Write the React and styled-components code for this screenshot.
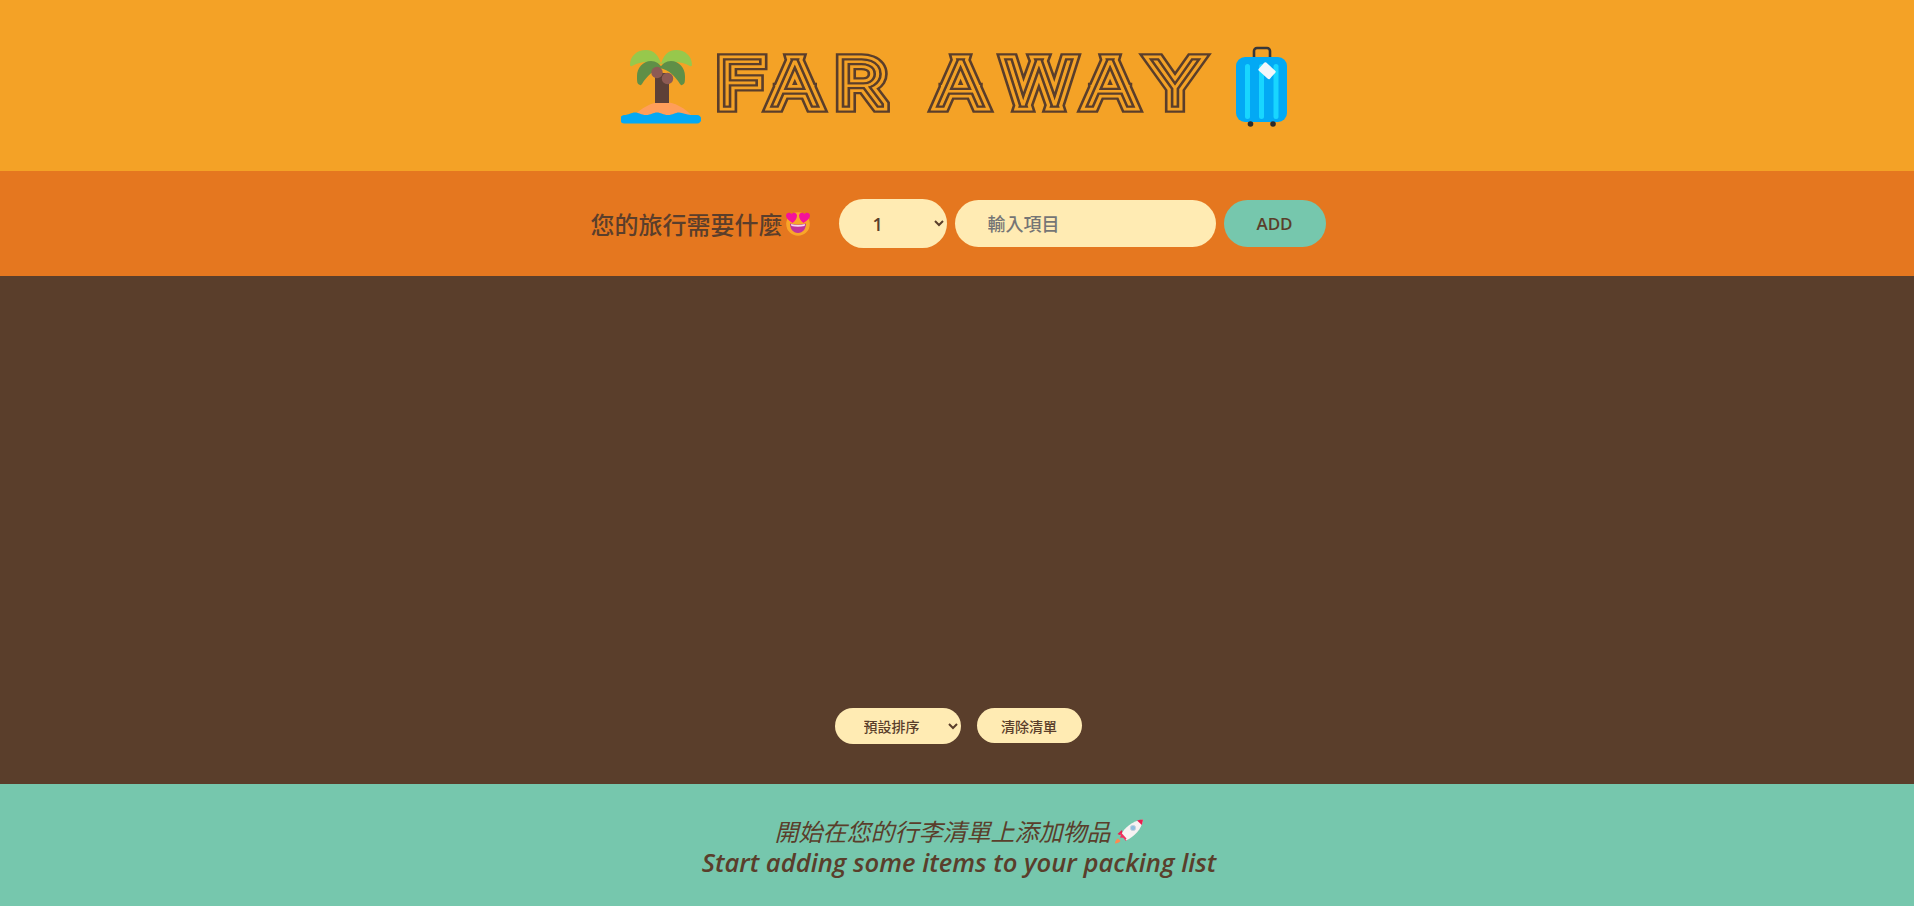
import React from "react";
import styled, { createGlobalStyle } from "styled-components";

const brown = "#5a3e2b";
const orange = "#f4a226";
const cream = "#ffebb3";
const green = "#76c7ad";
const sans = `"Open Sans", "Noto Sans CJK TC", sans-serif`;

const Global = createGlobalStyle`
  * { box-sizing: border-box; margin: 0; padding: 0; }
  html, body { height: 100%; }
  body { font-family: ${sans}; color: ${brown}; font-weight: 500; }
`;

const Page = styled.div`
  height: 906px;
  display: grid;
  grid-template-rows: 171px 105px 1fr 122px;
`;

const Header = styled.header`
  background: ${orange};
  display: flex;
  align-items: center;
  justify-content: center;
  padding: 4px 6px 0 0;
`;

const TitleMark = styled.svg`
  display: block;
  width: 498px;
  height: 65px;
  margin: 0 25px 10px 12px;
  overflow: visible;
  font-family: "Roboto", sans-serif;
  font-weight: 100;
  font-size: 62px;
`;

const SuitcaseIcon = styled.svg`
  display: block;
  margin-bottom: 2px;
`;

const Form = styled.form`
  background: #e5771f;
  display: flex;
  align-items: center;
  justify-content: center;
  gap: 8px;
`;

const Question = styled.h3`
  display: flex;
  align-items: center;
  gap: 2px;
  font-size: 24px;
  font-weight: 500;
  margin: 0 20px 0 2px;
`;

const Pill = styled.select`
  border: none;
  border-radius: 100px;
  background: ${cream};
  color: ${brown};
  font-family: ${sans};
  font-weight: 600;
`;

const CountSelect = styled(Pill)`
  width: 108px;
  height: 49px;
  font-size: 18px;
  padding: 0 30px;
`;

const ItemInput = styled.input`
  width: 261px;
  height: 47px;
  border: none;
  border-radius: 100px;
  background: ${cream};
  font-family: ${sans};
  font-size: 18px;
  font-weight: 500;
  padding: 0 33px;
  color: ${brown};
`;

const AddButton = styled.button`
  width: 102px;
  height: 47px;
  border: none;
  border-radius: 100px;
  background: ${green};
  color: ${brown};
  font-family: ${sans};
  font-size: 17px;
  font-weight: 600;
`;

const List = styled.main`
  background: ${brown};
  display: flex;
  flex-direction: column;
  justify-content: flex-end;
  padding-bottom: 40px;
`;

const Actions = styled.div`
  display: flex;
  justify-content: center;
  align-items: flex-start;
  gap: 16px;
  padding-left: 2px;
`;

const SortSelect = styled(Pill)`
  width: 126px;
  height: 36px;
  font-size: 14px;
  font-weight: 500;
  padding: 0 24px 0 25px;
`;

const ClearButton = styled.button`
  width: 105px;
  height: 35px;
  border: none;
  border-radius: 100px;
  background: ${cream};
  color: ${brown};
  font-family: ${sans};
  font-size: 14px;
  font-weight: 500;
`;

const Stats = styled.footer`
  background: ${green};
  display: flex;
  flex-direction: column;
  align-items: center;
  justify-content: center;
  line-height: 31px;
  font-style: italic;
  padding: 3px 0 0 4px;
`;

const StatLine = styled.div`
  display: flex;
  align-items: center;
  font-size: ${(p) => p.$size}px;
  font-weight: ${(p) => p.$weight};
`;

const Island = () => (
  <svg width="80" height="75" viewBox="0 0 80 75">
    <path d="M12 67C20 58 30 52 42 52s22 6 30 15z" fill="#ff9e5a" />
    <rect x="34" y="23" width="14" height="30" fill="#5d4037" />
    <path d="M9 15C9 6 16 0 25 0c8 0 13 6 15 14-10-3-21-3-29 2-1 .5-2 0-2-1z" fill="#97c84c" />
    <path d="M71 15C71 6 64 0 55 0c-8 0-13 6-15 14 10-3 21-3 29 2 1 .5 2 0 2-1z" fill="#97c84c" />
    <path d="M19 35c-3-1-3-3-3-9 0-8 6-15 14-15 5 0 9 3 11 7-9 2-15 8-20 16-.7 1-1.300 1.500-2 1z" fill="#5f8f47" />
    <path d="M61 35c3-1 3-3 3-9 0-8-6-15-14-15-5 0-9 3-11 7 9 2 15 8 20 16 .7 1 1.300 1.500 2 1z" fill="#5f8f47" />
    <circle cx="36" cy="22.500" r="5.700" fill="#8d5a54" />
    <circle cx="46.500" cy="28.500" r="5.700" fill="#8d5a54" />
    <path d="M3 65c5 0 7-2.500 11-2.500S20 65 25 65s7-2.500 11-2.500S42 65 47 65s7-2.500 11-2.500S65 65 70 65h6a3.500 3.500 0 0 1 0 8.500H3.500A4 4 0 0 1 3 65z" fill="#03a9f4" />
  </svg>
);

const Suitcase = () => (
  <SuitcaseIcon width="52" height="82" viewBox="0 0 52 82">
    <path d="M18 12V5a3 3 0 0 1 3-3h10a3 3 0 0 1 3 3v7" fill="none" stroke="#37373a" strokeWidth="2.600" />
    <rect x="0" y="11" width="51" height="65" rx="9" fill="#03a9f4" />
    <rect x="9" y="18" width="5" height="55" rx="2.500" fill="#18d6ff" />
    <rect x="23" y="18" width="5" height="55" rx="2.500" fill="#18d6ff" />
    <rect x="37.500" y="18" width="5" height="55" rx="2.500" fill="#18d6ff" />
    <rect x="24" y="19" width="15" height="11" rx="1.500" fill="#f3f6fa" transform="rotate(42 31 24)" />
    <circle cx="14.500" cy="78" r="2.800" fill="#2b2b2b" />
    <circle cx="37" cy="78" r="2.800" fill="#2b2b2b" />
  </SuitcaseIcon>
);

const HeartEyes = () => (
  <svg width="26" height="25" viewBox="0 0 26 25">
    <circle cx="13" cy="13" r="11.800" fill="#f9a629" />
    <path d="M5 12.500c5 1.500 11 1.500 16 0 0 5-3 9.500-8 9.500s-8-4.500-8-9.500z" fill="#c2339a" />
    <path d="M6 13c4.500 1.200 9.500 1.200 14 0l-.4 2c-4.300 1-9 1-13.200 0z" fill="#f5d7e8" />
    <path d="M7.500 12C4 9.500 1 7.500 1 4.500 1 2 4.500.5 6.500 3 8.500.5 12 2 12 4.500c0 3-2 5.500-4.500 7.500z" fill="#f5119a" />
    <path d="M18.500 12C22 9.500 25 7.500 25 4.500 25 2 21.500.5 19.500 3 17.500.5 14 2 14 4.500c0 3 2 5.500 4.500 7.500z" fill="#f5119a" />
  </svg>
);

const Rocket = () => (
  <svg width="30" height="25" viewBox="0 0 30 25" style={{ marginLeft: 3 }}>
    <path d="M1 24.500c0-2 1-4 3-5l2.500 2.500c-1 1.500-3.500 2.500-5.500 2.500z" fill="#ff8a50" />
    <path d="M8 11 3.500 15l2 1 3-1.500zM15 18l-3 4-1.500-1.500 1-3.500z" fill="#e91e4f" />
    <path d="M7 16C10 9 18 2 29 .5 28 10 20 18 12 21.500z" fill="#f7f2f2" />
    <path d="M23 1.500c2-.5 4-1 6-1-.3 2-.6 3.800-1.200 5.500z" fill="#e91e4f" />
    <path d="M5.500 14.500l1.500 2-1 2 3 .3 2.500 2.200 1-1.500-5-5.500z" fill="#f0325f" />
    <circle cx="19" cy="9" r="2.700" fill="#90bfe0" stroke="#c8d4dc" strokeWidth=".8" />
  </svg>
);

const lines = [
  [15.5, brown],
  [11, orange],
  [5.5, brown],
  [1, orange],
];

const Logo = () => (
  <TitleMark viewBox="0 0 498 65" role="img" aria-label="FAR AWAY">
    <defs>
      <text id="far-away-word" x="5.2 50.8 106 150 191.4 248 318 373" y="55">FAR AWAY</text>
    </defs>
    <g transform="scale(1.18 1)" strokeLinejoin="miter" strokeMiterlimit="2.500">
      {lines.map(([w, c]) => (
        <use key={w} href="#far-away-word" stroke={c} strokeWidth={w} fill={orange} />
      ))}
    </g>
  </TitleMark>
);

export default function App() {
  return (
    <Page>
      <Global />
      <Header>
        <Island />
        <Logo />
        <Suitcase />
      </Header>
      <Form>
        <Question>您的旅行需要什麼<HeartEyes /></Question>
        <CountSelect defaultValue="1">
          {Array.from({ length: 20 }, (_, i) => (
            <option key={i} value={i + 1}>{i + 1}</option>
          ))}
        </CountSelect>
        <ItemInput placeholder="輸入項目" />
        <AddButton type="button">ADD</AddButton>
      </Form>
      <List>
        <Actions>
          <SortSelect>
            <option>預設排序</option>
            <option>依描述排序</option>
            <option>依狀態排序</option>
          </SortSelect>
          <ClearButton type="button">清除清單</ClearButton>
        </Actions>
      </List>
      <Stats>
        <StatLine $weight={400} $size={24}>開始在您的行李清單上添加物品<Rocket /></StatLine>
        <StatLine $weight={600} $size={25.6}>Start adding some items to your packing list</StatLine>
      </Stats>
    </Page>
  );
}
